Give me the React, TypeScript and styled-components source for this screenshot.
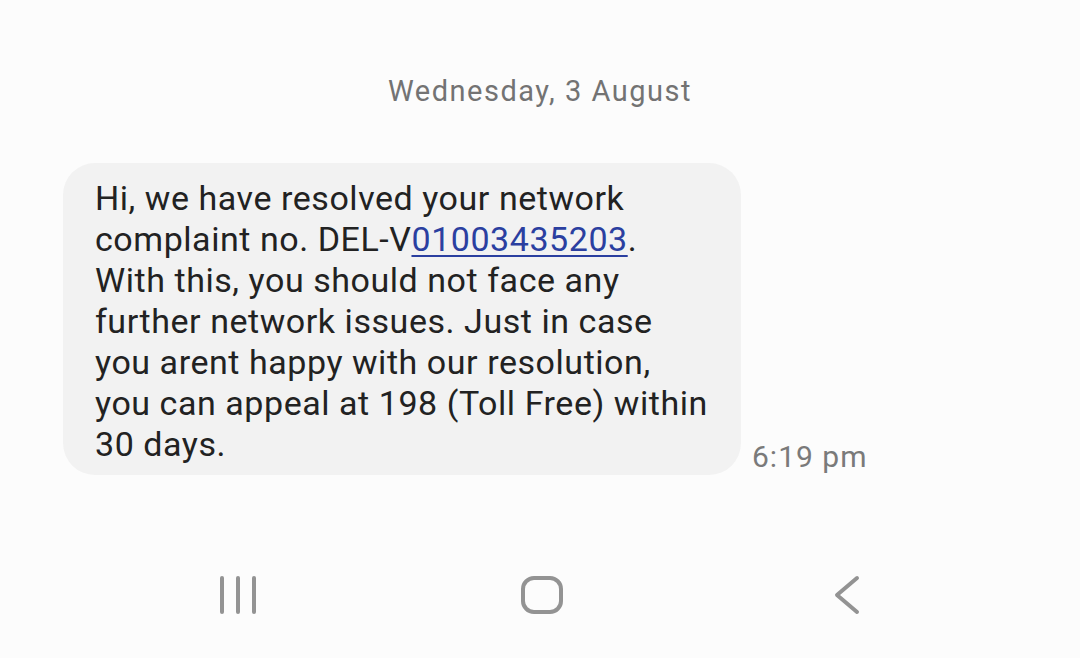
import React from 'react';
import styled, {createGlobalStyle} from 'styled-components';

const GlobalStyle = createGlobalStyle`
  html, body {
    margin: 0;
    padding: 0;
    background: #fcfcfc;
  }
  body {
    font-family: Roboto, "Noto Sans", sans-serif;
  }
`;

const Screen = styled.div`
  width: 1080px;
  height: 658px;
  display: flex;
  flex-direction: column;
  background: #fcfcfc;
  overflow: hidden;
`;

const Thread = styled.div`
  flex: 1;
  display: flex;
  flex-direction: column;
`;

const DateHeader = styled.div`
  margin-top: 72px;
  text-align: center;
  font-size: 29px;
  line-height: 38px;
  letter-spacing: 1.5px;
  color: #737373;
`;

const MessageRow = styled.div`
  margin-top: 53px;
  padding-left: 63px;
  display: flex;
  align-items: flex-end;
  gap: 11px;
`;

const Bubble = styled.div`
  width: 678px;
  box-sizing: border-box;
  padding: 15px 27px 10px 32px;
  background: #f2f2f2;
  border-radius: 32px;
  font-size: 34px;
  line-height: 41px;
  letter-spacing: 0.55px;
  color: #222;
`;

const Link = styled.a`
  color: #2b3fa0;
  text-decoration: underline;
  text-underline-offset: 4px;
  text-decoration-thickness: 1.5px;
`;

const Time = styled.div`
  font-size: 30px;
  line-height: 36px;
  letter-spacing: 1px;
  color: #7a7a7a;
`;

const NavBar = styled.div`
  height: 110px;
  box-sizing: border-box;
  padding-top: 24px;
  padding-left: 4px;
  display: flex;
  justify-content: center;
  align-items: flex-start;
  gap: 260px;
`;

const NavIcon = styled.svg`
  width: 44px;
  height: 44px;
  flex: none;
`;

const RecentIcon = () => (
  <NavIcon viewBox="0 0 44 44">
    <g stroke="#939393" strokeWidth="4" strokeLinecap="round">
      <line x1="6" y1="6" x2="6" y2="40" />
      <line x1="22" y1="6" x2="22" y2="40" />
      <line x1="38" y1="6" x2="38" y2="40" />
    </g>
  </NavIcon>
);

const HomeIcon = () => (
  <NavIcon viewBox="0 0 44 44">
    <rect x="3" y="6" width="38" height="34" rx="11" fill="none" stroke="#939393" strokeWidth="4" />
  </NavIcon>
);

const BackIcon = () => (
  <NavIcon viewBox="0 0 44 44">
    <polyline
      points="33,6 13,23 33,40"
      fill="none"
      stroke="#939393"
      strokeWidth="4"
      strokeLinecap="round"
      strokeLinejoin="round"
    />
  </NavIcon>
);

export default function App() {
  return (
    <>
      <GlobalStyle />
      <Screen>
        <Thread>
          <DateHeader>Wednesday, 3 August</DateHeader>
          <MessageRow>
            <Bubble>
              Hi, we have resolved your network complaint no. DEL-V
              <Link href="#">01003435203</Link>. With this, you should not face any further network
              issues. Just in case you arent happy with our resolution, you can appeal at 198 (Toll
              Free) within 30 days.
            </Bubble>
            <Time>6:19 pm</Time>
          </MessageRow>
        </Thread>
        <NavBar>
          <RecentIcon />
          <HomeIcon />
          <BackIcon />
        </NavBar>
      </Screen>
    </>
  );
}
